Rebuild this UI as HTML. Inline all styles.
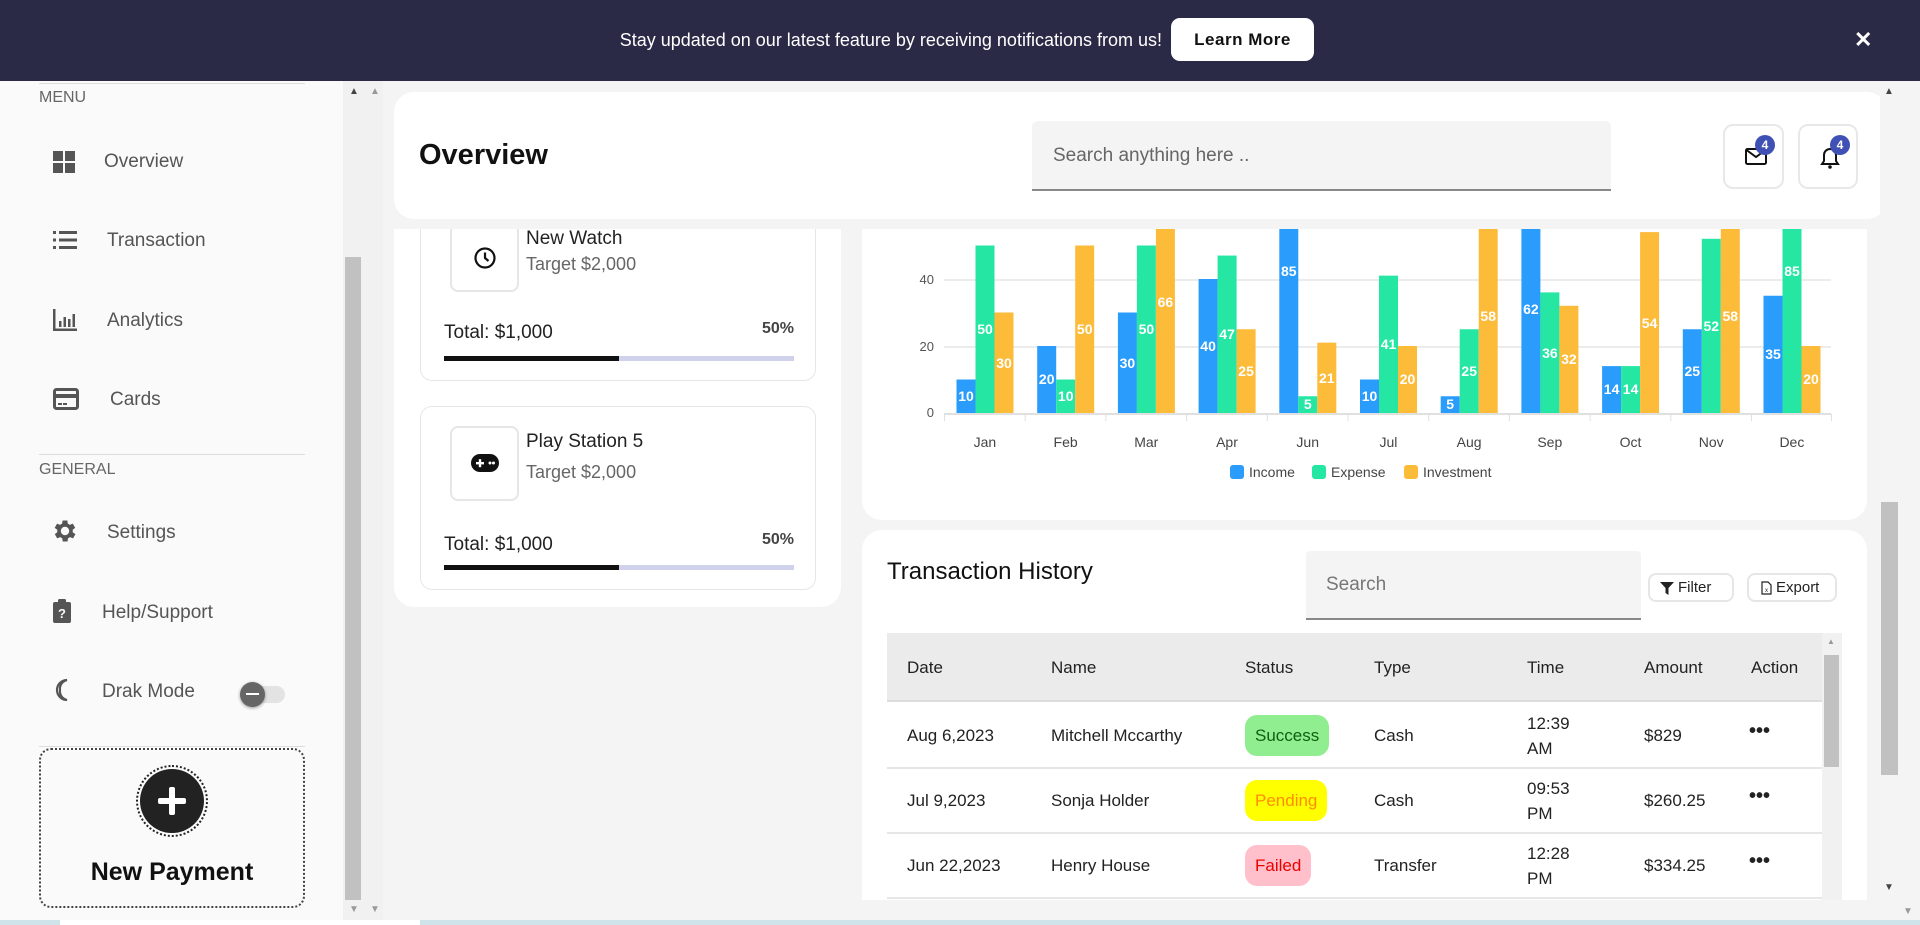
<!DOCTYPE html>
<html><head><meta charset="utf-8"><style>
*{box-sizing:border-box;margin:0;padding:0}
html,body{width:1920px;height:925px;overflow:hidden}
body{background:#f4f4f4;font-family:"Liberation Sans",sans-serif;position:relative}
.a{position:absolute}
.banner{left:0;top:0;width:1920px;height:81px;background:#2a2946;color:#fff}
.side{left:0;top:81px;width:343px;height:844px;background:#fafafa}
.si{position:absolute;left:0;font-size:19px;color:#555}
.si svg{position:absolute;left:53px}
.hr{position:absolute;left:39px;width:266px;height:1px;background:#ddd}
.card{background:#fff;border-radius:20px}
.th{font-size:17px;color:#222;position:absolute}
.td{font-size:17px;color:#222;position:absolute}
.badge{position:absolute;border-radius:12px;font-size:17px;padding:0 10px;height:41px;line-height:41px}
</style></head><body>
<div class="a banner">
 <div class="a" style="left:0;width:1162px;top:30px;text-align:right;font-size:18px;">Stay updated on our latest feature by receiving notifications from us!</div>
 <div class="a" style="left:1171px;top:18px;width:143px;height:43px;background:#fff;border-radius:9px;color:#111;font-size:17px;font-weight:bold;text-align:center;line-height:43px;letter-spacing:0.5px">Learn More</div>
 <div class="a" style="left:1854px;top:27px;font-size:22px;font-weight:bold">✕</div>
</div>
<div class="a side">
 <div class="hr" style="top:2px"></div>
 <div class="si" style="left:39px;top:8px;font-size:16px;color:#666">MENU</div>
 <div class="si" style="top:70px;width:343px"><svg width="22" height="22" viewBox="0 0 22 22" style="top:0"><rect x="0" y="0" width="10" height="10" fill="#555"/><rect x="12" y="0" width="10" height="10" fill="#555"/><rect x="0" y="12" width="10" height="10" fill="#555"/><rect x="12" y="12" width="10" height="10" fill="#555"/></svg><span style="position:absolute;left:104px;top:0">Overview</span></div>
 <div class="si" style="top:149px;width:343px"><svg width="24" height="20" viewBox="0 0 24 20" style="top:0"><g fill="#555"><rect x="0" y="1" width="3" height="3"/><rect x="6" y="1" width="18" height="3"/><rect x="0" y="8.5" width="3" height="3"/><rect x="6" y="8.5" width="18" height="3"/><rect x="0" y="16" width="3" height="3"/><rect x="6" y="16" width="18" height="3"/></g></svg><span style="position:absolute;left:107px;top:0">Transaction</span></div>
 <div class="si" style="top:229px;width:343px"><svg width="24" height="22" viewBox="0 0 24 22" style="top:-1px"><g fill="#555"><rect x="0" y="0" width="2.5" height="22"/><rect x="0" y="19.5" width="24" height="2.5"/><rect x="6" y="12" width="2.5" height="6"/><rect x="10.5" y="8" width="2.5" height="10"/><rect x="15" y="10" width="2.5" height="8"/><rect x="19.5" y="5" width="2.5" height="13"/></g></svg><span style="position:absolute;left:107px;top:0">Analytics</span></div>
 <div class="si" style="top:308px;width:343px"><svg width="26" height="22" viewBox="0 0 26 22" style="top:-1px"><rect x="1.5" y="1.5" width="23" height="19" rx="2" fill="none" stroke="#555" stroke-width="3"/><rect x="1.5" y="6" width="23" height="4" fill="#555"/><rect x="5" y="15" width="4" height="2" fill="#555"/><rect x="10" y="15" width="4" height="2" fill="#555"/></svg><span style="position:absolute;left:110px;top:0">Cards</span></div>
 <div class="hr" style="top:373px"></div>
 <div class="si" style="left:39px;top:380px;font-size:16px;color:#666">GENERAL</div>
 <div class="si" style="top:441px;width:343px"><svg width="24" height="24" viewBox="3 2 20 20" style="top:-3px"><path fill="#555" d="M19.4 13a7.5 7.5 0 000-2l2.1-1.6-2-3.5-2.5 1a7.4 7.4 0 00-1.7-1L15 3.2h-4l-.4 2.7a7.4 7.4 0 00-1.7 1l-2.5-1-2 3.5L6.6 11a7.5 7.5 0 000 2l-2.1 1.6 2 3.5 2.5-1a7.4 7.4 0 001.7 1l.4 2.7h4l.4-2.7a7.4 7.4 0 001.7-1l2.5 1 2-3.5zM13 15.5a3.5 3.5 0 110-7 3.5 3.5 0 010 7z"/></svg><span style="position:absolute;left:107px;top:0">Settings</span></div>
 <div class="si" style="top:521px;width:343px"><svg width="20" height="24" viewBox="0 0 20 24" style="top:-3px"><rect x="0" y="3" width="18" height="21" rx="2" fill="#555"/><rect x="5" y="0" width="8" height="5" rx="1.5" fill="#555"/><text x="9" y="19" font-size="13" font-weight="bold" fill="#fafafa" text-anchor="middle" font-family="Liberation Sans">?</text></svg><span style="position:absolute;left:102px;top:0">Help/Support</span></div>
 <div class="si" style="top:600px;width:343px"><svg width="22" height="24" viewBox="0 0 22 24" style="top:-3px"><path d="M14 2a10 10 0 100 20 9 9 0 01-7-10 9 9 0 017-10z" fill="none" stroke="#555" stroke-width="2.2"/></svg><span style="position:absolute;left:102px;top:0">Drak Mode</span>
  <div style="position:absolute;left:243px;top:5px;width:42px;height:17px;border-radius:9px;background:#e3e3e3"></div>
  <div style="position:absolute;left:240px;top:1px;width:25px;height:25px;border-radius:50%;background:#666;box-shadow:0 1px 3px rgba(0,0,0,.4)"><div style="position:absolute;left:6px;top:11px;width:13px;height:2px;background:#fff"></div></div>
 </div>
 <div class="hr" style="top:665px"></div>
 <div class="a" style="left:39px;top:667px;width:266px;height:160px;border:2px dotted #444;border-radius:12px">
  <div class="a" style="left:95px;top:15px;width:72px;height:72px;border-radius:50%;border:2px dotted #222;"></div>
  <div class="a" style="left:99px;top:19px;width:64px;height:64px;border-radius:50%;background:#222"></div>
  <div class="a" style="left:117px;top:48px;width:28px;height:6px;background:#fff;border-radius:2px"></div>
  <div class="a" style="left:128px;top:37px;width:6px;height:28px;background:#fff;border-radius:2px"></div>
  <div class="a" style="left:0;width:262px;top:108px;text-align:center;font-size:25px;font-weight:bold;color:#111">New Payment</div>
 </div>
</div>
<div class="a" style="left:343px;top:81px;width:40px;height:844px;background:#f1f1f1"></div>
<div class="a" style="left:345px;top:257px;width:16px;height:643px;background:#c1c1c1"></div>
<div class="a" style="left:349px;top:86px;font-size:10px;color:#444">▲</div>
<div class="a" style="left:370px;top:86px;font-size:10px;color:#999">▲</div>
<div class="a" style="left:349px;top:904px;font-size:10px;color:#999">▼</div>
<div class="a" style="left:370px;top:904px;font-size:10px;color:#999">▼</div>

<div class="a" style="left:394px;top:229px;width:447px;height:378px;background:#fff;border-radius:0 0 20px 20px;overflow:hidden">
 <div class="a" style="left:26px;top:-20px;width:396px;height:172px;border:1px solid #e6e6e6;border-radius:12px">
  <div class="a" style="left:29px;top:13px;width:69px;height:69px;border:2px solid #e6e6e6;border-radius:8px"><svg class="a" style="left:21px;top:21px" width="24" height="24" viewBox="0 0 24 24"><circle cx="12" cy="12" r="9.5" fill="none" stroke="#111" stroke-width="2.2"/><path d="M12 6.5V12l3.5 3" fill="none" stroke="#111" stroke-width="2.2"/></svg></div>
  <div class="a" style="left:105px;top:18px;font-size:19px;color:#222">New Watch</div>
  <div class="a" style="left:105px;top:44px;font-size:18px;color:#666">Target $2,000</div>
  <div class="a" style="left:23px;top:112px;font-size:19px;color:#222">Total: $1,000</div>
  <div class="a" style="left:320px;top:110px;width:53px;text-align:right;font-size:16px;font-weight:bold;color:#444">50%</div>
  <div class="a" style="left:23px;top:146px;width:350px;height:5px;background:#d0d2ec"></div>
  <div class="a" style="left:23px;top:146px;width:175px;height:5px;background:#111"></div>
 </div>
 <div class="a" style="left:26px;top:177px;width:396px;height:184px;border:1px solid #e6e6e6;border-radius:12px">
  <div class="a" style="left:29px;top:19px;width:69px;height:75px;border:2px solid #e6e6e6;border-radius:8px"><svg class="a" style="left:19px;top:26px" width="28" height="18" viewBox="0 0 28 18"><rect x="0" y="0" width="28" height="18" rx="9" fill="#111"/><rect x="5" y="8" width="8" height="2.4" fill="#fff"/><rect x="7.8" y="5.2" width="2.4" height="8" fill="#fff"/><circle cx="19" cy="9" r="1.5" fill="#fff"/><circle cx="22.5" cy="9" r="1.5" fill="#fff"/></svg></div>
  <div class="a" style="left:105px;top:24px;font-size:19px;color:#222">Play Station 5</div>
  <div class="a" style="left:105px;top:55px;font-size:18px;color:#666">Target $2,000</div>
  <div class="a" style="left:23px;top:127px;font-size:19px;color:#222">Total: $1,000</div>
  <div class="a" style="left:320px;top:124px;width:53px;text-align:right;font-size:16px;font-weight:bold;color:#444">50%</div>
  <div class="a" style="left:23px;top:158px;width:350px;height:5px;background:#d0d2ec"></div>
  <div class="a" style="left:23px;top:158px;width:175px;height:5px;background:#111"></div>
 </div>
</div>

<div class="a" style="left:862px;top:229px;width:1005px;height:291px;background:#fff;border-radius:0 0 20px 20px"></div>
<svg class="a" style="left:862px;top:229px" width="1005" height="291" viewBox="0 0 1005 291" font-family="Liberation Sans">
 <g stroke="#e6e6e6" stroke-width="1.5"><line x1="82" y1="51" x2="969" y2="51"/><line x1="82" y1="118" x2="969" y2="118"/></g>
 <g fill="#555" font-size="13" text-anchor="end"><text x="72" y="55">40</text><text x="72" y="122">20</text><text x="72" y="188">0</text></g>
 <g fill="#2a9cfb">
  <rect x="94.5" y="150.5" width="19" height="33.5"/><rect x="175.2" y="117" width="19" height="67"/><rect x="255.9" y="83.5" width="19" height="100.5"/><rect x="336.6" y="50" width="19" height="134"/><rect x="417.3" y="-101" width="19" height="285"/><rect x="498" y="150.5" width="19" height="33.5"/><rect x="578.7" y="167.25" width="19" height="16.75"/><rect x="659.4" y="-24" width="19" height="208"/><rect x="740.1" y="137.1" width="19" height="46.9"/><rect x="820.8" y="100.25" width="19" height="83.75"/><rect x="901.5" y="66.75" width="19" height="117.25"/>
 </g>
 <g fill="#26e6a4">
  <rect x="113.5" y="16.5" width="19" height="167.5"/><rect x="194.2" y="150.5" width="19" height="33.5"/><rect x="274.9" y="16.5" width="19" height="167.5"/><rect x="355.6" y="26.55" width="19" height="157.45"/><rect x="436.3" y="167.25" width="19" height="16.75"/><rect x="517" y="46.65" width="19" height="137.35"/><rect x="597.7" y="100.25" width="19" height="83.75"/><rect x="678.4" y="63.4" width="19" height="120.6"/><rect x="759.1" y="137.1" width="19" height="46.9"/><rect x="839.8" y="9.8" width="19" height="174.2"/><rect x="920.5" y="-101" width="19" height="285"/>
 </g>
 <g fill="#fdbb3a">
  <rect x="132.5" y="83.5" width="19" height="100.5"/><rect x="213.2" y="16.5" width="19" height="167.5"/><rect x="293.9" y="-37" width="19" height="221"/><rect x="374.6" y="100.25" width="19" height="83.75"/><rect x="455.3" y="113.65" width="19" height="70.35"/><rect x="536" y="117" width="19" height="67"/><rect x="616.7" y="-10.3" width="19" height="194.3"/><rect x="697.4" y="76.8" width="19" height="107.2"/><rect x="778.1" y="3.1" width="19" height="180.9"/><rect x="858.8" y="-10.3" width="19" height="194.3"/><rect x="939.5" y="117" width="19" height="67"/>
 </g>
 <g fill="#fff" font-size="14" font-weight="bold" text-anchor="middle">
  <text x="104" y="172">10</text><text x="184.7" y="155">20</text><text x="265.4" y="139">30</text><text x="346.1" y="122">40</text><text x="426.8" y="47">85</text><text x="507.5" y="172">10</text><text x="588.2" y="180">5</text><text x="668.9" y="85">62</text><text x="749.6" y="165">14</text><text x="830.3" y="147">25</text><text x="911" y="130">35</text>
  <text x="123" y="105">50</text><text x="203.7" y="172">10</text><text x="284.4" y="105">50</text><text x="365.1" y="110">47</text><text x="445.8" y="180">5</text><text x="526.5" y="120">41</text><text x="607.2" y="147">25</text><text x="687.9" y="129">36</text><text x="768.6" y="165">14</text><text x="849.3" y="102">52</text><text x="930" y="47">85</text>
  <text x="142" y="139">30</text><text x="222.7" y="105">50</text><text x="303.4" y="78">66</text><text x="384.1" y="147">25</text><text x="464.8" y="154">21</text><text x="545.5" y="155">20</text><text x="626.2" y="92">58</text><text x="706.9" y="135">32</text><text x="787.6" y="99">54</text><text x="868.3" y="92">58</text><text x="949" y="155">20</text>
 </g>
 <line x1="82" y1="185" x2="969" y2="185" stroke="#e0e0e0" stroke-width="2"/>
 <g stroke="#e0e0e0" stroke-width="1"><line x1="82.5" y1="185" x2="82.5" y2="192"/><line x1="163.2" y1="185" x2="163.2" y2="192"/><line x1="243.9" y1="185" x2="243.9" y2="192"/><line x1="324.6" y1="185" x2="324.6" y2="192"/><line x1="405.3" y1="185" x2="405.3" y2="192"/><line x1="486" y1="185" x2="486" y2="192"/><line x1="566.7" y1="185" x2="566.7" y2="192"/><line x1="647.4" y1="185" x2="647.4" y2="192"/><line x1="728.1" y1="185" x2="728.1" y2="192"/><line x1="808.8" y1="185" x2="808.8" y2="192"/><line x1="889.5" y1="185" x2="889.5" y2="192"/><line x1="969.5" y1="185" x2="969.5" y2="192"/></g>
 <g fill="#444" font-size="14" text-anchor="middle">
  <text x="122.9" y="218">Jan</text><text x="203.6" y="218">Feb</text><text x="284.3" y="218">Mar</text><text x="365" y="218">Apr</text><text x="445.7" y="218">Jun</text><text x="526.4" y="218">Jul</text><text x="607.1" y="218">Aug</text><text x="687.8" y="218">Sep</text><text x="768.5" y="218">Oct</text><text x="849.2" y="218">Nov</text><text x="929.9" y="218">Dec</text>
 </g>
 <g font-size="14" fill="#444">
  <rect x="368" y="236" width="14" height="14" rx="3" fill="#2a9cfb"/><text x="387" y="248">Income</text>
  <rect x="450" y="236" width="14" height="14" rx="3" fill="#26e6a4"/><text x="469" y="248">Expense</text>
  <rect x="542" y="236" width="14" height="14" rx="3" fill="#fdbb3a"/><text x="561" y="248">Investment</text>
 </g>
</svg>

<div class="a card" style="left:394px;top:92px;width:1493px;height:127px"></div>
<div class="a" style="left:419px;top:139px;font-size:29px;font-weight:bold;color:#111">Overview</div>
<div class="a" style="left:1032px;top:121px;width:579px;height:70px;background:#f4f4f4;border-bottom:2px solid #888;border-radius:6px 6px 0 0"><div class="a" style="left:21px;top:24px;font-size:19px;color:#666">Search anything here ..</div></div>
<div class="a" style="left:1723px;top:124px;width:61px;height:65px;border:2px solid #e8e8e8;border-radius:10px"><svg class="a" style="left:20px;top:22px" width="22" height="17" viewBox="0 0 22 17"><rect x="1" y="1" width="20" height="15" rx="1.5" fill="none" stroke="#111" stroke-width="2"/><path d="M1.5 2l9.5 7 9.5-7" fill="none" stroke="#111" stroke-width="2"/></svg><div class="a" style="left:30px;top:9px;width:20px;height:20px;border-radius:50%;background:#3f51b5;color:#fff;font-size:12px;font-weight:bold;text-align:center;line-height:20px">4</div></div>
<div class="a" style="left:1798px;top:124px;width:60px;height:65px;border:2px solid #e8e8e8;border-radius:10px"><svg class="a" style="left:19px;top:20px" width="22" height="24" viewBox="0 0 22 24"><path d="M3 18h16l-2-3v-6a6 6 0 00-12 0v6z" fill="none" stroke="#111" stroke-width="2"/><circle cx="11" cy="21" r="1.8" fill="#111"/></svg><div class="a" style="left:30px;top:9px;width:20px;height:20px;border-radius:50%;background:#3f51b5;color:#fff;font-size:12px;font-weight:bold;text-align:center;line-height:20px">4</div></div>

<div class="a" style="left:862px;top:530px;width:1005px;height:395px;background:#fff;border-radius:20px 20px 0 0"></div>
<div class="a" style="left:887px;top:558px;font-size:24px;color:#111;font-weight:500">Transaction History</div>
<div class="a" style="left:1306px;top:551px;width:335px;height:69px;background:#f4f4f4;border-bottom:2px solid #888;border-radius:4px 4px 0 0"><div class="a" style="left:20px;top:23px;font-size:19px;color:#777">Search</div></div>
<div class="a" style="left:1648px;top:573px;width:86px;height:29px;border:2px solid #e6e6e6;border-radius:8px;font-size:15px;color:#222;line-height:25px;padding-left:28px"><svg class="a" style="left:10px;top:7px" width="14" height="13" viewBox="0 0 14 13"><path d="M0 0h14L8.5 6v7L5.5 11V6z" fill="#222"/></svg>Filter</div>
<div class="a" style="left:1747px;top:573px;width:90px;height:29px;border:2px solid #e6e6e6;border-radius:8px;font-size:15px;color:#222;line-height:25px;padding-left:27px"><svg class="a" style="left:12px;top:6px" width="11" height="14" viewBox="0 0 11 14"><path d="M1 1h6l3 3v9H1z" fill="none" stroke="#222" stroke-width="1.2"/><text x="5.5" y="11" font-size="6" text-anchor="middle" fill="#222">x</text></svg>Export</div>
<div class="a" style="left:887px;top:633px;width:935px;height:69px;background:#ebebeb;border-bottom:2px solid #ddd"></div>
<div class="a" style="left:1822px;top:633px;width:20px;height:270px;background:#f1f1f1"></div>
<div class="a" style="left:1824px;top:655px;width:15px;height:112px;background:#c1c1c1"></div>
<div class="a" style="left:1827px;top:637px;font-size:8px;color:#999">▲</div>
<div class="th" style="left:907px;top:658px">Date</div><div class="th" style="left:1051px;top:658px">Name</div><div class="th" style="left:1245px;top:658px">Status</div><div class="th" style="left:1374px;top:658px">Type</div><div class="th" style="left:1527px;top:658px">Time</div><div class="th" style="left:1644px;top:658px">Amount</div><div class="th" style="left:1751px;top:658px">Action</div>
<div class="a" style="left:887px;top:767px;width:935px;height:2px;background:#e6e6e6"></div>
<div class="a" style="left:887px;top:832px;width:935px;height:2px;background:#e6e6e6"></div>
<div class="a" style="left:887px;top:897px;width:935px;height:2px;background:#e6e6e6"></div>
<div class="td" style="left:907px;top:726px">Aug 6,2023</div><div class="td" style="left:1051px;top:726px">Mitchell Mccarthy</div><div class="badge" style="left:1245px;top:715px;background:#90ee90;color:#106010">Success</div><div class="td" style="left:1374px;top:726px">Cash</div><div class="td" style="left:1527px;top:711px;line-height:25px">12:39<br>AM</div><div class="td" style="left:1644px;top:726px">$829</div><div class="td" style="left:1749px;top:720px;font-size:20px;font-weight:bold">•••</div>
<div class="td" style="left:907px;top:791px">Jul 9,2023</div><div class="td" style="left:1051px;top:791px">Sonja Holder</div><div class="badge" style="left:1245px;top:780px;background:#ffff00;color:#ff8c00">Pending</div><div class="td" style="left:1374px;top:791px">Cash</div><div class="td" style="left:1527px;top:776px;line-height:25px">09:53<br>PM</div><div class="td" style="left:1644px;top:791px">$260.25</div><div class="td" style="left:1749px;top:785px;font-size:20px;font-weight:bold">•••</div>
<div class="td" style="left:907px;top:856px">Jun 22,2023</div><div class="td" style="left:1051px;top:856px">Henry House</div><div class="badge" style="left:1245px;top:845px;background:#ffc0cb;color:#e00">Failed</div><div class="td" style="left:1374px;top:856px">Transfer</div><div class="td" style="left:1527px;top:841px;line-height:25px">12:28<br>PM</div><div class="td" style="left:1644px;top:856px">$334.25</div><div class="td" style="left:1749px;top:850px;font-size:20px;font-weight:bold">•••</div>

<div class="a" style="left:1880px;top:81px;width:40px;height:844px;background:#f4f4f4"></div>
<div class="a" style="left:1881px;top:502px;width:17px;height:273px;background:#c1c1c1"></div>
<div class="a" style="left:1884px;top:86px;font-size:10px;color:#444">▲</div>
<div class="a" style="left:1884px;top:882px;font-size:10px;color:#444">▼</div>
<div class="a" style="left:1903px;top:906px;font-size:10px;color:#999">▼</div>
<div class="a" style="left:383px;top:900px;width:1497px;height:20px;background:#f4f4f4"></div>
<div class="a" style="left:0;top:920px;width:1920px;height:5px;background:#cfe3ea"></div>
<div class="a" style="left:60px;top:920px;width:360px;height:5px;background:#fff"></div>
</body></html>
